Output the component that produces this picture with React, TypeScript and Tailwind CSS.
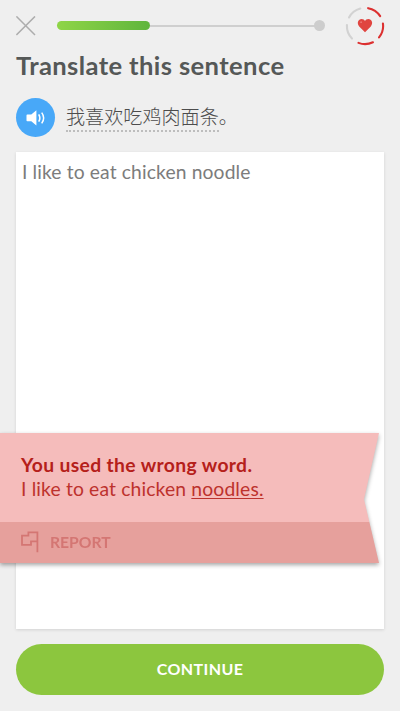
import React, { useState } from "react";

const lives = [ true, true, true, false, false ];

function CloseIcon() {

  return (

    <svg className="block h-5 w-5" viewBox="0 0 20 20" fill="none" stroke="#adadad" strokeWidth="1.5">
      <path d="M0.4 0.4 L19 19 M19 0.4 L0.4 19" />
    </svg>

  )

}

function Lives() {

  return (

    <svg className="block h-10 w-10" viewBox="0 0 40 40" fill="none">

      {

        lives.map( ( active, index ) => (

          <circle
            key={index}
            cx="20"
            cy="20"
            r="18.1"
            stroke={active ? '#dc3030' : '#d2d2d2'}
            strokeWidth="2.1"
            strokeLinecap="round"
            pathLength={360}
            strokeDasharray="47 313"
            transform={`rotate(${-80 + index * 72} 20 20)`}
          />

        ) )

      }

      <path d="M20 26.3 L14.2 20.4 C11.4 17.2 13.3 13.1 16.6 13.1 C18.3 13.1 19.4 14 20 15.1 C20.6 14 21.7 13.1 23.4 13.1 C26.7 13.1 28.6 17.2 25.8 20.4 Z" fill="#e04540" />
      <circle cx="16.1" cy="16.2" r="0.9" fill="#ec7a75" />

    </svg>

  )

}

function SpeakerIcon() {

  return (

    <svg className="block h-[18px] w-[20px]" viewBox="0 0 20 18" fill="none">
      <path d="M1.3 5.6 H5.3 L10.4 1.2 V16.6 L5.3 12.3 H1.3 Q0.5 12.3 0.5 11.5 V6.4 Q0.5 5.6 1.3 5.6 Z" fill="white" />
      <path d="M12.7 5.3 Q15 9 12.7 12.7" stroke="white" strokeWidth="1.6" />
      <path d="M15.7 3.6 Q19.6 9 15.7 14.4" stroke="white" strokeWidth="1.5" />
    </svg>

  )

}

function ReportIcon() {

  return (

    <svg className="block h-[22px] w-[18px]" viewBox="0 0 18 22" fill="none" stroke="#d47673" strokeWidth="1.8">
      <path d="M16.4 21.2 V1.4 H7.4 V4.6 H1 V13.8 H10 V10.4 H16.4" />
    </svg>

  )

}

export default function App() {

  const [ answer, setAnswer ] = useState( 'I like to eat chicken noodle' );

  return (

    <div className="relative flex h-[711px] w-[400px] flex-col overflow-hidden bg-[#efefef] px-4 pb-4 font-['Lato','Noto_Sans_CJK_SC',sans-serif]">

      {/* Progress and lives */}
      <header className="-mr-2 flex h-[51px] items-center">

        <button type="button" aria-label="Close"><CloseIcon /></button>

        <div className="ml-[20.5px] flex w-[268px] shrink-0 items-center">

          <div className="h-[9px] w-[93px] rounded-full bg-linear-to-r from-[#8fd547] to-[#5fb53d]" />

          <div className="h-0.5 flex-1 bg-[#cfcfcf]" />

          <div className="-ml-1 h-[11px] w-[11px] rounded-full bg-[#cdcdcd]" />

        </div>

        <div className="ml-[20.5px] shrink-0"><Lives /></div>

      </header>

      <h1 className="h-[31px] whitespace-nowrap text-[25.6px] leading-[29px] font-bold tracking-[0.38px] text-[#555857]">Translate this sentence</h1>

      <div className="mt-4 flex h-[39px] items-center">

        <button className="flex h-[39px] w-[39px] items-center justify-center rounded-full bg-[#48a8f8]" type="button" aria-label="Listen">

          <SpeakerIcon />

        </button>

        <p className="ml-[11px] flex text-[19.1px] leading-[27px] font-light text-[#4c4c4c]" lang="zh-CN">

          <span className="border-b-2 border-dotted border-[#bdbdbd]">我喜欢吃鸡肉面条</span>

          <span>。</span>

        </p>

      </div>

      <textarea
        className="mt-[15px] h-[477px] w-full resize-none bg-white px-1.5 pt-2 text-[19.3px] leading-6 tracking-[0.12px] text-[#7c7c7c] shadow-[0_1px_3px_rgba(0,0,0,0.12)] outline-none"
        value={answer}
        onChange={( event ) => setAnswer( event.target.value )}
        spellCheck={false}
      />

      <button className="mt-[15px] h-[51px] w-full shrink-0 rounded-full bg-[#8cc63e] pb-0.5 text-base font-bold tracking-[0.4px] text-white" type="button">CONTINUE</button>

      {/* Correction ribbon, lies over the answer */}
      <div className="absolute top-[433px] left-0 w-[379px] drop-shadow-[0_2px_2px_rgba(0,0,0,0.35)]">

        <div className="[clip-path:polygon(0_0,100%_0,364px_51%,100%_100%,0_100%)]">

          <div className="h-[89px] bg-[#f5bcbb] pt-5 pl-[21px] text-[19.3px] leading-6 text-[#b5201a]">

            <p className="font-bold tracking-[0.37px]">You used the wrong word.</p>

            <p className="tracking-[0.15px] text-[#bd322d]">I like to eat chicken <span className="underline decoration-1 underline-offset-2">noodles.</span></p>

          </div>

          <button className="flex h-[41px] w-full items-center bg-[#e6a09c] pb-0.5 pl-[21px] text-[15.7px] text-[#d47673]" type="button">

            <ReportIcon />

            <span className="ml-[11px] pt-0.5 font-bold">REPORT</span>

          </button>

        </div>

      </div>

    </div>

  )

}
